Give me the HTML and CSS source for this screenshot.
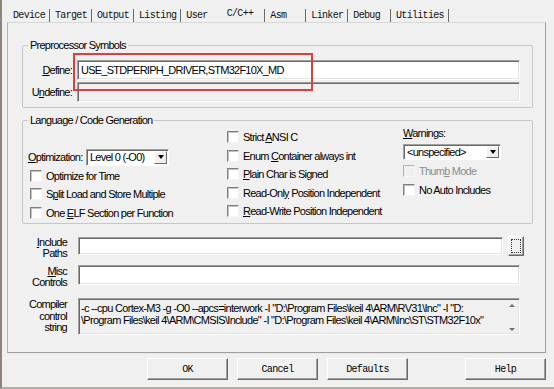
FILE: index.html
```html
<!DOCTYPE html>
<html lang="en">
<head>
    <meta charset="UTF-8">
    <title>Options for Target - C/C++</title>
    <link rel="stylesheet" href="styles.css">
</head>
<body>
    <div class="window">
        <div class="tabs">
            <span class="tab">Device</span>
            <span class="tab">Target</span>
            <span class="tab">Output</span>
            <span class="tab">Listing</span>
            <span class="tab tab-user">User</span>
            <span class="tab active">C/C++</span>
            <span class="tab tab-asm">Asm</span>
            <span class="tab">Linker</span>
            <span class="tab tab-debug">Debug</span>
            <span class="tab">Utilities</span>
        </div>

        <div class="panel">
            <!-- Preprocessor Symbols -->
            <fieldset class="group group-pre">
                <legend>Preprocessor Symbols</legend>
                <div class="field-row">
                    <label><u>D</u>efine:</label>
                    <div class="edit">USE_STDPERIPH_DRIVER,STM32F10X_MD</div>
                </div>
                <div class="field-row">
                    <label>U<u>n</u>define:</label>
                    <div class="edit disabled"></div>
                </div>
            </fieldset>

            <!-- Language / Code Generation -->
            <fieldset class="group group-lang">
                <legend>Language / Code Generation</legend>
                <div class="lang-grid">
                    <div class="col col-a">
                        <div class="opt-row">
                            <label class="opt-label"><u>O</u>ptimization:</label>
                            <div class="combo combo-opt"><span>Level 0 (-O0)</span><i class="drop"></i></div>
                        </div>
                        <div class="check"><span class="box"></span><span>Optimize for Time</span></div>
                        <div class="check"><span class="box"></span><span>S<u>p</u>lit Load and Store Multiple</span></div>
                        <div class="check"><span class="box"></span><span>One <u>E</u>LF Section per Function</span></div>
                    </div>
                    <div class="col col-b">
                        <div class="check"><span class="box"></span><span>Strict <u>A</u>NSI C</span></div>
                        <div class="check"><span class="box"></span><span>Enum <u>C</u>ontainer always int</span></div>
                        <div class="check"><span class="box"></span><span><u>P</u>lain Char is Signed</span></div>
                        <div class="check"><span class="box"></span><span>Read-Onl<u>y</u> Position Independent</span></div>
                        <div class="check"><span class="box"></span><span><u>R</u>ead-Write Position Independent</span></div>
                    </div>
                    <div class="col col-c">
                        <div class="warn-label"><u>W</u>arnings:</div>
                        <div class="combo combo-warn"><span>&lt;unspecified&gt;</span><i class="drop"></i></div>
                        <div class="check off"><span class="box"></span><span>Thum<u>b</u> Mode</span></div>
                        <div class="check"><span class="box"></span><span>No Auto Includes</span></div>
                    </div>
                </div>
            </fieldset>

            <!-- Paths and controls -->
            <div class="paths">
                <div class="path-row row-include">
                    <label><u>I</u>nclude<br>Paths</label>
                    <div class="edit"></div>
                    <span class="browse"><i></i></span>
                </div>
                <div class="path-row row-misc">
                    <label><u>M</u>isc<br>Controls</label>
                    <div class="edit"></div>
                </div>
                <div class="path-row row-compiler">
                    <label>Compiler<br>control<br>string</label>
                    <div class="edit disabled cmdline">
                        <div class="cmd-text">-c --cpu Cortex-M3 -g -O0 --apcs=interwork -I "D:\Program Files\keil 4\ARM\RV31\Inc" -I "D:<br>\Program Files\keil 4\ARM\CMSIS\Include" -I "D:\Program Files\keil 4\ARM\Inc\ST\STM32F10x"</div>
                        <div class="scroll"><i class="up"></i><i class="down"></i></div>
                    </div>
                </div>
            </div>
        </div>

        <div class="buttons">
            <button class="btn">OK</button>
            <button class="btn">Cancel</button>
            <button class="btn">Defaults</button>
            <button class="btn btn-help">Help</button>
        </div>

        <!-- annotation around the Define field -->
        <div class="highlight"></div>
    </div>
</body>
</html>
```

FILE: styles.css
```css
body {
    margin: 0;
    background-color: #f0f0f0;
    font-family: 'Liberation Sans', Arial, sans-serif;
    font-size: 11px;
    letter-spacing: -0.75px;
    line-height: 14px;
    color: #000;
}
.window {
    position: relative;
    width: 552px;
    height: 387px;
    border-left: 2px solid #8e8479;
    border-bottom: 2px solid #b9ada1;
    background: #f0f0f0;
}

/* tab strip */
.tabs {
    display: flex;
    align-items: flex-end;
    height: 22px;
    padding-left: 6px;
    font-family: 'Liberation Mono', 'Courier New', monospace;
    font-size: 10px;
    letter-spacing: -0.67px;
    color: #111;
}
.tab {
    height: 13px;
    line-height: 13px;
    padding: 0 4px 0 5px;
    border-right: 1px solid #6a6a6a;
    white-space: nowrap;
}
.tab-user {
    border-right: none;
}
.tab.active {
    line-height: 10px;
    padding: 0 11px 0 15px;
}
.tab-asm {
    padding-right: 19px;
}
.tab-debug {
    padding-right: 10px;
}

/* page panel */
.panel {
    margin-left: 5px;
    width: 537px;
    height: 329px;
    border: 1px solid #a0a0a0;
    border-top-color: #d8d8d8;
    border-left-color: #b4b4b4;
    box-shadow: 1px 1px 0 #e8e8e8;
}

.group {
    margin: 0 12px 0 14px;
    border: 1px solid #c6c6c6;
    border-radius: 2px;
    min-width: 0;
}
.group legend {
    margin-left: 5px;
    padding: 0 2px;
    line-height: 14px;
}
.group-pre {
    margin-top: 15px;
    padding: 8px 12px 5px 0;
}
.group-lang {
    margin-top: 5px;
    padding: 1px 0 1px 0;
}

.field-row {
    display: grid;
    grid-template-columns: 49px 1fr;
    column-gap: 5px;
    align-items: center;
    height: 20px;
}
.field-row + .field-row {
    margin-top: 2px;
}
.field-row label {
    text-align: right;
}

.edit {
    box-sizing: border-box;
    height: 20px;
    background: #fff;
    border: 1px solid;
    border-color: #a0a0a0 #fff #fff #a0a0a0;
    box-shadow: inset 1px 1px 0 #696969, inset -1px -1px 0 #e3e3e3;
    padding: 2px 3px;
    white-space: nowrap;
    overflow: hidden;
}
.edit.disabled {
    background: #f0f0f0;
}

/* language grid */
.lang-grid {
    display: grid;
    grid-template-columns: 199px 176px 1fr;
    padding-left: 5px;
}
.col-a {
    padding-top: 20px;
}
.opt-row {
    display: flex;
    align-items: center;
    height: 18.5px;
}
.opt-label {
    flex: none;
    width: 58px;
    white-space: nowrap;
}
.check {
    display: flex;
    align-items: center;
    gap: 4px;
    height: 18.5px;
    white-space: nowrap;
}
.col-a .check {
    padding-left: 2px;
}
.box {
    flex: none;
    box-sizing: border-box;
    width: 12px;
    height: 12px;
    background: #fff;
    border: 1px solid;
    border-color: #7f7f7f #f4f4f4 #f4f4f4 #7f7f7f;
    box-shadow: inset 1px 1px 0 #c4c4c4;
}
.check.off {
    color: #8d8d8d;
}
.check.off .box {
    background: #f0f0f0;
    border-color: #b0b0b0 #f8f8f8 #f8f8f8 #b0b0b0;
    box-shadow: none;
}
.warn-label {
    height: 13px;
    line-height: 13px;
    margin-top: -1px;
}
.combo {
    box-sizing: border-box;
    display: flex;
    align-items: center;
    background: #fff;
    border: 1px solid;
    border-color: #a0a0a0 #fff #fff #a0a0a0;
    box-shadow: inset 1px 1px 0 #696969;
    padding: 1px 1px 1px 3px;
}
.combo span {
    flex: 1;
    white-space: nowrap;
}
.combo-opt {
    flex: none;
    width: 83px;
    height: 17px;
}
.combo-warn {
    width: 98px;
    height: 16px;
    margin-top: 4px;
    margin-bottom: 2px;
}
.drop {
    box-sizing: border-box;
    display: flex;
    align-items: center;
    justify-content: center;
    width: 13px;
    height: 100%;
    background: #f0f0f0;
    border: 1px solid;
    border-color: #fff #696969 #696969 #fff;
}
.drop::before {
    content: '';
    border-top: 4px solid #000;
    border-left: 3.5px solid transparent;
    border-right: 3.5px solid transparent;
}

/* paths and controls */
.paths {
    margin: 12px 23px 0 14px;
}
.path-row {
    display: grid;
    grid-template-columns: 45px 425px 1fr;
    column-gap: 11px;
    line-height: 11px;
    align-items: start;
}
.path-row label {
    text-align: right;
    padding-top: 1px;
}
.row-include .edit {
    height: 18px;
    margin-top: 1px;
}
.browse {
    box-sizing: border-box;
    width: 16px;
    height: 20px;
    margin-left: -6px;
    background: #f0f0f0;
    border: 1px solid;
    border-color: #fff #696969 #696969 #fff;
    box-shadow: inset -1px -1px 0 #a0a0a0;
    padding: 2px;
}
.browse i {
    display: block;
    height: 100%;
    border: 1px dotted #333;
    box-sizing: border-box;
}
.row-misc {
    margin-top: 6px;
}
.row-misc .edit,
.row-compiler .edit {
    grid-column: 2 / 4;
    margin-right: 2px;
}
.row-compiler {
    margin-top: 10px;
    line-height: 11.5px;
}
.cmdline {
    display: flex;
    height: 37px;
    padding: 3px 0 0 2px;
}
.cmd-text {
    flex: 1;
    line-height: 12px;
    letter-spacing: -0.7px;
}
.scroll {
    width: 14px;
    display: flex;
    flex-direction: column;
    justify-content: space-between;
    align-items: center;
    padding: 2px 0 3px;
}
.scroll i {
    width: 0;
    height: 0;
    border-left: 3px solid transparent;
    border-right: 3px solid transparent;
}
.scroll .up {
    border-bottom: 3px solid #707070;
}
.scroll .down {
    border-top: 3px solid #707070;
}

/* dialog buttons */
.buttons {
    display: flex;
    gap: 9px;
    padding: 5px 0 0 145px;
}
.btn {
    box-sizing: border-box;
    width: 81px;
    height: 22px;
    margin: 0;
    background: #f0f0f0;
    border: 1px solid;
    border-color: #fff #696969 #696969 #fff;
    box-shadow: inset -1px -1px 0 #a0a0a0;
    font-family: 'Liberation Mono', 'Courier New', monospace;
    font-size: 10px;
    letter-spacing: -0.67px;
    color: #000;
    padding: 0;
}
.btn-help {
    margin-left: 48px;
}

.highlight {
    position: absolute;
    left: 71px;
    top: 53px;
    width: 240px;
    height: 38px;
    box-sizing: border-box;
    border: 2px solid #e8393d;
}
```
